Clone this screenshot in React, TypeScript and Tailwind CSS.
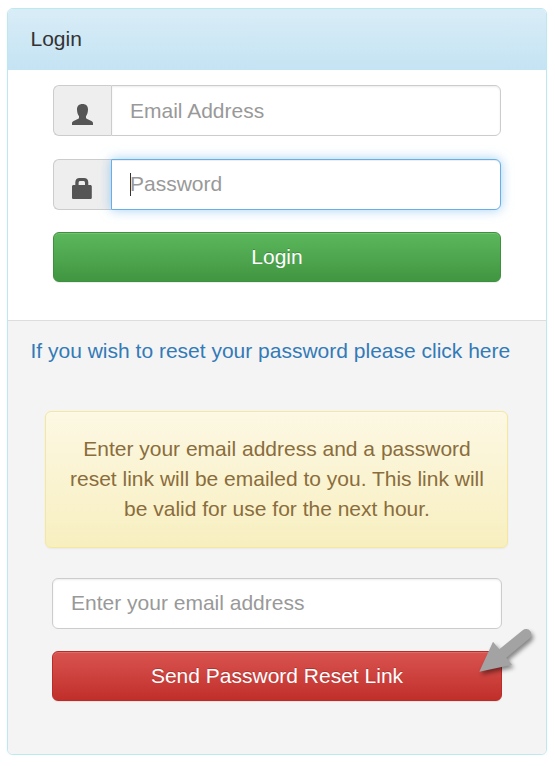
import type { ReactNode } from 'react'

const UserIcon = () => (
  <svg width="21" height="21" viewBox="0 0 21 21" fill="#555555">
    <path d="M10.500 0C6.800 0 5 2.200 5 5.300c0 3 .7 5.300 2 7v1.500c0 .6-.5 1-1.200 1.300L1.600 17.100C.500 17.700 0 18.300 0 19.300V21h21v-1.700c0-1-.5-1.600-1.600-2.200l-4.200-2c-.7-.3-1.200-.7-1.200-1.300v-1.500c1.300-1.700 2-4 2-7C16 2.200 14.200 0 10.500 0z" />
  </svg>
)

const LockIcon = () => (
  <svg width="20" height="21" viewBox="0 0 20 21" fill="#555555">
    <path d="M3.300 7V4.300C3.300 1.500 5 0 7.500 0h4.600c2.500 0 4.200 1.500 4.200 4.300V7h1.900c1 0 1.600.6 1.600 1.500v10.900c0 1-.6 1.600-1.600 1.600H1.600C.600 21 0 20.400 0 19.400V8.500C0 7.600.600 7 1.600 7zM6.600 7h6.400V4.900c0-1.300-.7-1.900-1.700-1.900H8.300c-1 0-1.700.6-1.700 1.900z" />
  </svg>
)

const Addon = ({ children }: { children: ReactNode }) => (
  <div className="w-[58px] shrink-0 rounded-l-[6px] border border-r-0 border-[#cccccc] bg-[#eeeeee] pt-[18px] pl-[18px]">
    {children}
  </div>
)

const PointerArrow = () => (
  <svg
    className="absolute -top-[27px] -right-[36px] overflow-visible"
    width="60"
    height="52"
    viewBox="0 0 60 52"
  >
    <path
      className="drop-shadow-[2px_3px_2px_rgba(0,0,0,0.45)]"
      d="M1.300 47.700 15 17.700l6.300 7.600L44.700 6.200A5.300 5.300 0 0 1 51.300 14.500L28.200 33.700l5.800 7z"
      fill="#a3a3a3"
    />
  </svg>
)

export default function App() {
  return (
    <div className="pt-2 pl-[7px] font-['Liberation_Sans',Arial,sans-serif] text-[21px] leading-[30px] text-[#333333]">
      <div className="flex h-[747px] w-[540px] flex-col overflow-hidden rounded-[6px] border border-[#bce8f1] bg-white shadow-[0_1px_3px_rgba(0,0,0,0.05)]">
        <div className="h-[61px] shrink-0 bg-linear-to-b from-[#d9edf7] to-[#c4e3f3] pt-[15px] pl-[22.5px]">
          Login
        </div>

        <form className="h-[250px] shrink-0 px-[45px] pt-[15px]">
          <div className="flex h-[51px]">
            <Addon>
              <UserIcon />
            </Addon>
            <input
              type="email"
              placeholder="Email Address"
              className="min-w-0 flex-1 rounded-r-[6px] border border-[#cccccc] bg-white px-[18px] shadow-[inset_0_1px_2px_rgba(0,0,0,0.075)] outline-none placeholder:text-[#999999]"
            />
          </div>

          <div className="mt-[23px] flex h-[51px]">
            <Addon>
              <LockIcon />
            </Addon>
            <div className="relative flex min-w-0 flex-1">
              <input
                type="password"
                placeholder="Password"
                className="min-w-0 flex-1 rounded-r-[6px] border border-[#66afe9] bg-white px-[18px] pb-[2px] shadow-[inset_0_1px_1px_rgba(0,0,0,0.075),0_0_12px_rgba(102,175,233,0.6)] outline-none placeholder:text-[#999999]"
              />
              <span className="absolute top-[14px] left-[19px] h-[23px] w-px bg-[#333333]" />
            </div>
          </div>

          <button
            type="button"
            className="mt-[22px] block h-[50px] w-full rounded-[6px] border border-[#3e8f3e] bg-linear-to-b from-[#5cb85c] to-[#419641] text-white shadow-[inset_0_1px_0_rgba(255,255,255,0.15),0_1px_1px_rgba(0,0,0,0.075)] [text-shadow:0_-1px_0_rgba(0,0,0,0.2)]"
          >
            Login
          </button>
        </form>

        <div className="flex-1 border-t border-[#dddddd] bg-[#f4f4f4] pt-[15px]">
          <a href="#" className="ml-[22.5px] block whitespace-nowrap text-[#337ab7]">
            If you wish to reset your password please click here
          </a>

          <div className="mt-[45px] ml-[37px] h-[137px] w-[463px] rounded-[6px] border border-[#f5e79e] bg-linear-to-b from-[#fcf8e3] to-[#f8efc0] pt-[22px] pl-px text-center text-[#8a6d3b] shadow-[inset_0_1px_0_rgba(255,255,255,0.25),0_1px_2px_rgba(0,0,0,0.05)] [text-shadow:0_1px_0_rgba(255,255,255,0.2)]">
            Enter your email address and a password
            <br />
            reset link will be emailed to you. This link will
            <br />
            be valid for use for the next hour.
          </div>

          <form className="mt-[30px] ml-[44px] w-[450px]">
            <input
              type="email"
              placeholder="Enter your email address"
              className="block h-[51px] w-full rounded-[6px] border border-[#cccccc] bg-white px-[18px] pb-[2px] shadow-[inset_0_1px_2px_rgba(0,0,0,0.075)] outline-none placeholder:text-[#999999]"
            />
            <div className="relative mt-[22px]">
              <button
                type="button"
                className="block h-[50px] w-full rounded-[6px] border border-[#b92c28] bg-linear-to-b from-[#d9534f] to-[#c12e2a] text-white shadow-[inset_0_1px_0_rgba(255,255,255,0.15),0_1px_1px_rgba(0,0,0,0.075)] [text-shadow:0_-1px_0_rgba(0,0,0,0.2)]"
              >
                Send Password Reset Link
              </button>
              <PointerArrow />
            </div>
          </form>
        </div>
      </div>
    </div>
  )
}
